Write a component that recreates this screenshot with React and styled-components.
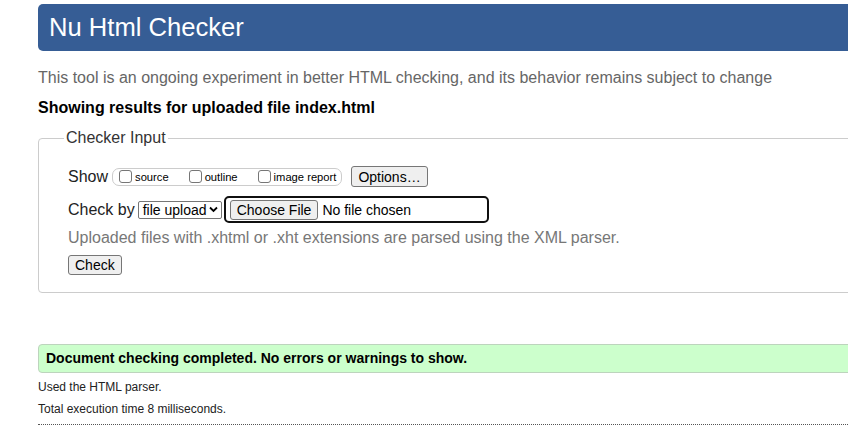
import React from 'react';
import styled, { createGlobalStyle } from 'styled-components';

const GlobalStyle = createGlobalStyle`
  html, body {
    margin: 0;
    padding: 0;
    background: #fff;
    overflow: hidden;
  }
  body {
    font-family: "Liberation Sans", Arial, sans-serif;
    color: #000;
  }
`;

const Page = styled.div`
  width: 1100px;
  padding: 4px 0 0 38px;
`;

const Header = styled.h1`
  margin: 0;
  height: 47px;
  padding-left: 11px;
  background-color: #365d95;
  border-radius: 5px;
  color: #fff;
  font-size: 25.6px;
  font-weight: normal;
  line-height: 47px;
`;

const Intro = styled.p`
  margin: 17px 0 0;
  color: #666;
  font-size: 16px;
  line-height: 20px;
`;

const ResultsFor = styled.p`
  margin: 10px 0 0;
  font-size: 16px;
  font-weight: bold;
  line-height: 20px;
`;

const Fieldset = styled.fieldset`
  margin: 10px 0 0;
  padding: 0 0 17px 29px;
  border: 1px solid #ccc;
  border-radius: 4px;
  min-width: 0;
`;

const Legend = styled.legend`
  margin-left: -4px;
  padding: 0 2px;
  color: #333;
  font-size: 16px;
  line-height: 20px;
`;

const Row = styled.div`
  display: flex;
  align-items: center;
  height: ${p => p.height}px;
  margin-top: ${p => p.gap}px;
`;

const RowLabel = styled.span`
  font-size: 16px;
  color: #222;
  margin-right: ${p => p.space}px;
`;

const CheckGroup = styled.div`
  display: flex;
  align-items: center;
  height: 16px;
  padding: 0 5px 0 2px;
  border: 1px solid #ccc;
  border-radius: 7px;
`;

const CheckItem = styled.label`
  display: flex;
  align-items: center;
  font-size: 11.2px;
  margin-right: ${p => (p.last ? 0 : 16)}px;
`;

const Box = styled.input`
  appearance: none;
  width: 13px;
  height: 13px;
  margin: 0 3px 0 4px;
  border: 1px solid #767676;
  border-radius: 3px;
  background: #fff;
  box-sizing: border-box;
`;

const Button = styled.button`
  height: ${p => p.h}px;
  padding: 0 6px;
  margin-left: ${p => p.ml || 0}px;
  background: #efefef;
  border: 1px solid #767676;
  border-radius: 3px;
  color: #000;
  font-family: "Liberation Sans", Arial, sans-serif;
  font-size: 14px;
  line-height: 1;
`;

const Select = styled.div`
  display: flex;
  align-items: center;
  justify-content: space-between;
  box-sizing: border-box;
  width: 84px;
  height: 18px;
  padding: 0 3px 0 4px;
  border: 1px solid #767676;
  border-radius: 2px;
  font-size: 14px;
`;

const FileField = styled.div`
  display: flex;
  align-items: center;
  box-sizing: border-box;
  width: 265px;
  height: 27px;
  margin-left: 2px;
  padding-left: 4px;
  border: 2px solid #101010;
  border-radius: 5px;
  font-size: 14px;
`;

const FileStatus = styled.span`
  margin-left: 4px;
`;

const Hint = styled.p`
  margin: 5px 0 0;
  color: #777;
  font-size: 16px;
  line-height: 20px;
`;

const CheckWrap = styled.div`
  margin-top: 7px;
`;

const Success = styled.p`
  margin: 51px 0 0;
  height: 27px;
  padding-left: 7px;
  background-color: #ccffcc;
  border: 1px solid #bdd4bd;
  border-radius: 4px;
  font-size: 14px;
  font-weight: bold;
  line-height: 27px;
`;

const Detail = styled.p`
  margin: 6px 0 0;
  font-size: 12px;
  line-height: 16px;
  color: #222;
`;

const Dotted = styled.hr`
  margin: 7px 0 0;
  border: 0;
  border-top: 1px dotted #555;
`;

const Chevron = () => (
  <svg width="9" height="7" viewBox="0 0 9 7">
    <path d="M1 1.5 L4.5 5 L8 1.5" fill="none" stroke="#000" strokeWidth="1.8" />
  </svg>
);

const showOptions = ['source', 'outline', 'image report'];

const App = () => (
  <>
    <GlobalStyle />
    <Page>
      <Header>Nu Html Checker</Header>
      <Intro>
        This tool is an ongoing experiment in better HTML checking, and its behavior remains subject to change
      </Intro>
      <ResultsFor>Showing results for uploaded file index.html</ResultsFor>

      <Fieldset>
        <Legend>Checker Input</Legend>

        {/* show options */}
        <Row gap={18} height={21}>
          <RowLabel space={4}>Show</RowLabel>
          <CheckGroup>
            {showOptions.map((opt, i) => (
              <CheckItem key={`opt-${i}`} last={i === showOptions.length - 1}>
                <Box type="checkbox" />
                {opt}
              </CheckItem>
            ))}
          </CheckGroup>
          <Button h={21} ml={9}>Options…</Button>
        </Row>

        {/* check by */}
        <Row gap={9} height={27}>
          <RowLabel space={3}>Check by</RowLabel>
          <Select>
            file upload
            <Chevron />
          </Select>
          <FileField>
            <Button h={20}>Choose File</Button>
            <FileStatus>No file chosen</FileStatus>
          </FileField>
        </Row>

        <Hint>Uploaded files with .xhtml or .xht extensions are parsed using the XML parser.</Hint>
        <CheckWrap>
          <Button h={20}>Check</Button>
        </CheckWrap>
      </Fieldset>

      <Success>Document checking completed. No errors or warnings to show.</Success>
      <Detail>Used the HTML parser.</Detail>
      <Detail>Total execution time 8 milliseconds.</Detail>
      <Dotted />
    </Page>
  </>
);

export default App;
